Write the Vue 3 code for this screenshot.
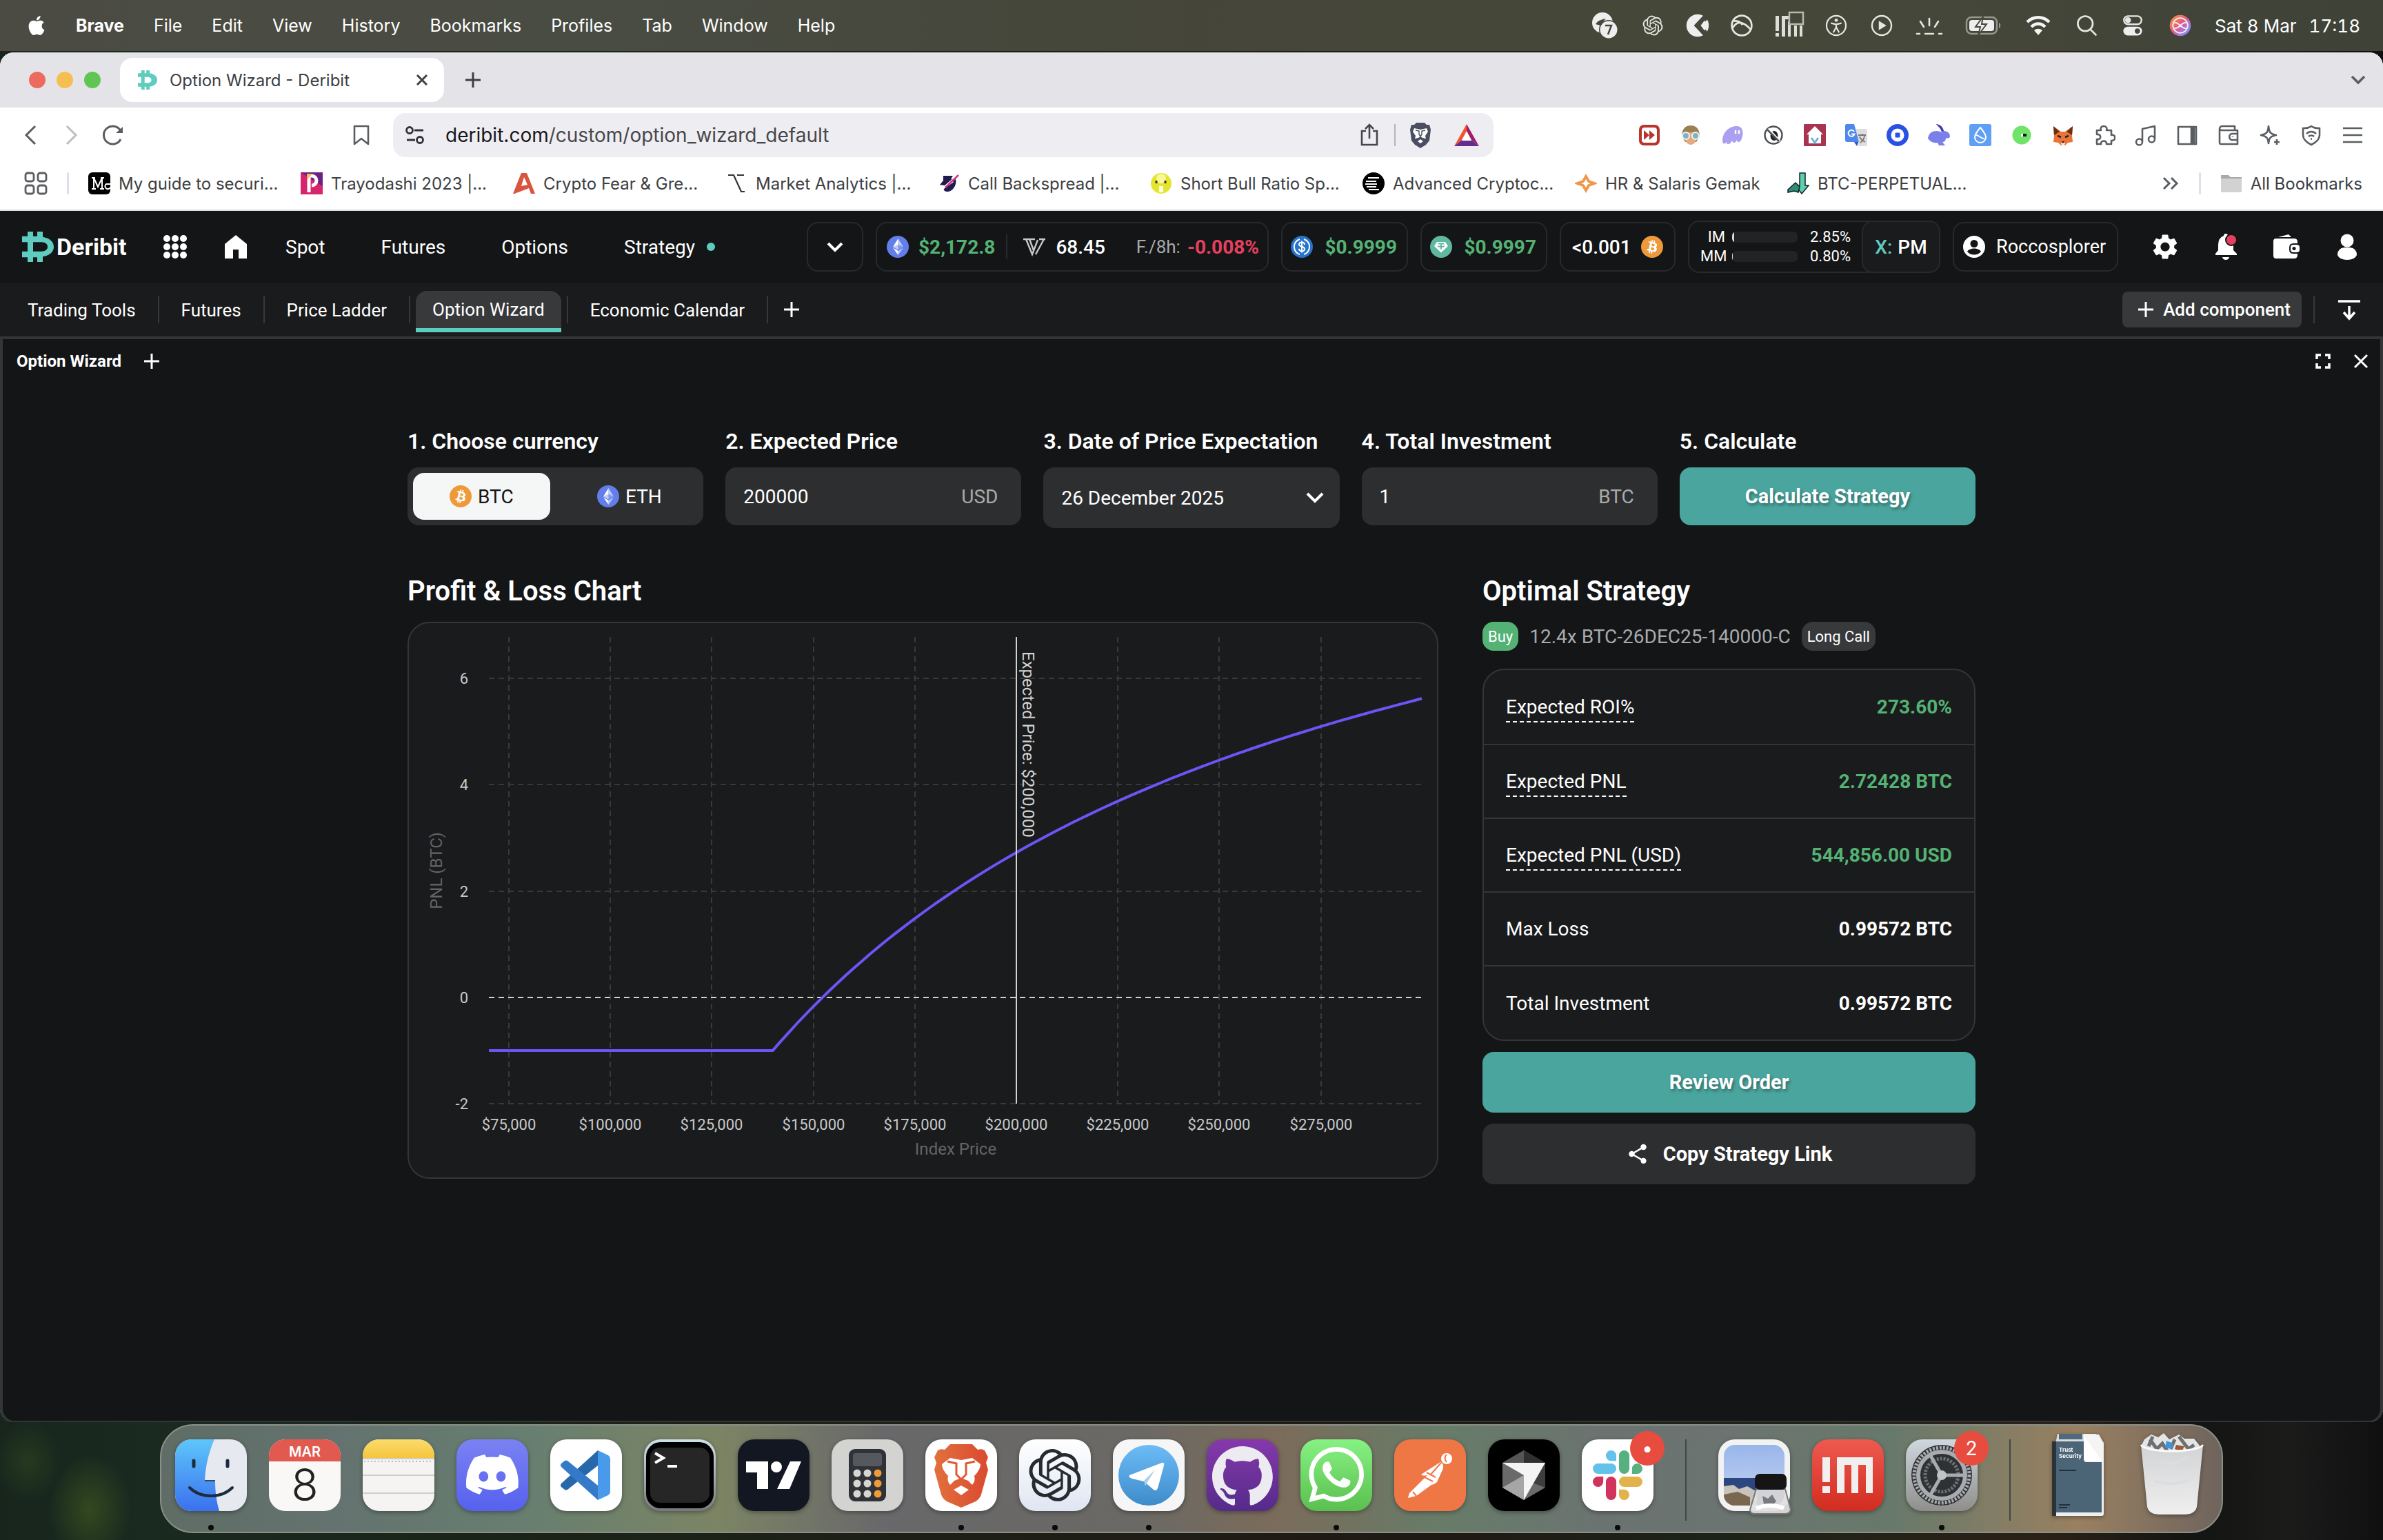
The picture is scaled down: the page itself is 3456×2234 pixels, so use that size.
<script setup>
import { ref, computed } from 'vue'

const menus = ['File', 'Edit', 'View', 'History', 'Bookmarks', 'Profiles', 'Tab', 'Window', 'Help']

const openai = 'M22.28 9.82a5.98 5.98 0 0 0-.52-4.91 6.05 6.05 0 0 0-6.51-2.9A6.07 6.07 0 0 0 4.98 4.18a5.98 5.98 0 0 0-4 2.9 6.05 6.05 0 0 0 .74 7.1 5.98 5.98 0 0 0 .51 4.91 6.05 6.05 0 0 0 6.52 2.9A5.98 5.98 0 0 0 13.26 24a6.06 6.06 0 0 0 5.77-4.21 5.99 5.99 0 0 0 4-2.9 6.06 6.06 0 0 0-.75-7.07zm-9.02 12.61a4.48 4.48 0 0 1-2.88-1.04l.14-.08 4.78-2.76a.8.8 0 0 0 .39-.68v-6.74l2.02 1.17a.07.07 0 0 1 .04.05v5.58a4.5 4.5 0 0 1-4.49 4.5zM3.6 18.3a4.47 4.47 0 0 1-.54-3.01l.14.09 4.79 2.75a.77.77 0 0 0 .78 0l5.84-3.36v2.33a.08.08 0 0 1-.03.06L9.74 19.95a4.5 4.5 0 0 1-6.14-1.65zM2.34 7.9a4.49 4.49 0 0 1 2.37-1.98V11.6a.77.77 0 0 0 .38.68l5.82 3.35-2.02 1.17a.08.08 0 0 1-.07 0l-4.83-2.79A4.5 4.5 0 0 1 2.34 7.87zm16.6 3.85L13.1 8.36 15.12 7.2a.08.08 0 0 1 .07 0l4.83 2.79a4.49 4.49 0 0 1-.68 8.1v-5.67a.79.79 0 0 0-.4-.67zm2.01-3.02l-.14-.09-4.78-2.78a.78.78 0 0 0-.78 0L9.41 9.23V6.9a.07.07 0 0 1 .03-.06l4.83-2.79a4.5 4.5 0 0 1 6.68 4.66zM8.3 12.86L6.29 11.7a.08.08 0 0 1-.04-.06V6.07a4.5 4.5 0 0 1 7.37-3.45l-.14.08L8.7 5.46a.8.8 0 0 0-.39.68zm1.1-2.36l2.6-1.5 2.61 1.5v3l-2.6 1.5-2.61-1.5Z'
const btcMark = 'M23.189 14.02c.314-2.096-1.283-3.223-3.465-3.975l.708-2.84-1.728-.43-.69 2.765c-.454-.114-.92-.22-1.385-.326l.695-2.783L15.596 6l-.708 2.839c-.376-.086-.746-.17-1.104-.26l.002-.009-2.384-.595-.46 1.846s1.283.294 1.256.312c.7.175.826.638.805 1.006l-.806 3.235c.048.012.11.03.18.057l-.183-.045-1.13 4.532c-.086.212-.303.531-.793.41.018.025-1.256-.313-1.256-.313l-.858 1.978 2.25.561c.418.105.828.215 1.231.318l-.715 2.872 1.727.43.708-2.84c.472.127.93.245 1.378.357l-.706 2.828 1.728.43.715-2.866c2.948.558 5.164.333 6.097-2.333.752-2.146-.037-3.385-1.588-4.192 1.13-.26 1.98-1.003 2.207-2.538zm-3.95 5.538c-.533 2.147-4.148.986-5.32.695l.95-3.805c1.172.293 4.929.872 4.37 3.11zm.535-5.569c-.487 1.953-3.495.96-4.47.717l.86-3.45c.975.243 4.118.696 3.61 2.733z'
const btcIcon = `<circle cx="16" cy="16" r="16" fill="#ee9a3a"/><path d="${btcMark}" fill="#fff"/>`
const ethIcon = '<circle cx="16" cy="16" r="16" fill="#627eea"/><g fill="#fff"><path fill-opacity=".6" d="M16.5 4v8.87l7.5 3.35z"/><path d="M16.5 4L9 16.22l7.5-3.35z"/><path fill-opacity=".6" d="M16.5 21.97v6.03L24 17.62z"/><path d="M16.5 28v-6.03L9 17.62z"/><path fill-opacity=".2" d="M16.5 20.57l7.5-4.35-7.5-3.35z"/><path fill-opacity=".6" d="M9 16.22l7.5 4.35v-7.7z"/></g>'
const usdcIcon = '<circle cx="16" cy="16" r="16" fill="#2775ca"/><path d="M13 5a11.5 11.5 0 0 0 0 22M19 5a11.5 11.5 0 0 1 0 22" fill="none" stroke="#fff" stroke-width="2"/><path d="M20 13c0-2-1.5-3.5-4-3.5s-4 1.2-4 3c0 4.500 8 2 8 6.500 0 2-1.600 3.200-4 3.200s-4-1.400-4-3.400M16 7.500v17" fill="none" stroke="#fff" stroke-width="2"/>'
const usdtIcon = '<circle cx="16" cy="16" r="16" fill="#5fb8a0"/><path d="M10 9h12l4 6-10 9.500L6 15z" fill="#fff"/><path d="M11.500 11.500h9M16 11.500v8M11 15c2 1.300 8 1.300 10 0" fill="none" stroke="#5fb8a0" stroke-width="2"/>'

const trayIcons = [
  { gap: 0, w: 40, art: '<circle cx="18" cy="16" r="15" fill="#eee"/><path d="M8 18c4-6 10-7 15-8-4 4-6 8-8 10z" fill="#45473b"/><circle cx="27" cy="26" r="14" fill="#45473b"/><circle cx="27" cy="26" r="12.500" fill="#eee"/><path d="M22 20h9l-5 13" fill="none" stroke="#45473b" stroke-width="2.500"/>' },
  { gap: 34, w: 34, art: `<path transform="translate(3 3) scale(1.420)" d="${openai}" fill="#e4e4e0"/>` },
  { gap: 30, w: 36, art: '<circle cx="20" cy="20" r="18" fill="#eee"/><path d="M14 20L31 2l6 6-9 12 9 12-6 6z" fill="#45473b"/><path d="M25 20l6-8a11 11 0 0 1 0 16z" fill="#eee"/>' },
  { gap: 28, w: 36, art: '<g fill="none" stroke="#e6e6e2" stroke-width="3"><circle cx="20" cy="20" r="16"/><path d="M5 25c7-14 17-12 30 2M7 13c6-1 11 1 14 6"/></g>' },
  { gap: 28, w: 44, art: '<g fill="#deded8"><path d="M1 6h5v22H1zM1 31h5v5H1zM10 6h5v30h-5zM15 6h6v5h-6zM19 14h4v22h-4zM28 20h4v16h-4zM36 20h4v16h-4z"/></g><rect x="21" y="1" width="20" height="17" fill="#45473b" stroke="#b8b9b0" stroke-width="2.500"/>' },
  { gap: 30, w: 34, art: '<g fill="none" stroke="#e6e6e2" stroke-width="2.600"><circle cx="20" cy="20" r="16.500"/><path d="M11 16l9 2 9-2M20 18v5l-5 9M20 23l5 9"/></g><circle cx="20" cy="11" r="2.800" fill="#e6e6e2"/>' },
  { gap: 32, w: 34, art: '<circle cx="20" cy="20" r="16.500" fill="none" stroke="#e6e6e2" stroke-width="2.800"/><path d="M15 12l13 8-13 8z" fill="#e6e6e2"/>' },
  { gap: 32, w: 40, art: '<g stroke="#e6e6e2" stroke-width="2.600" stroke-linecap="round"><path d="M20 10v10M7 14l5 8M33 14l-5 8M2 32h4M14 32h12M34 32h4"/></g>' },
  { gap: 32, w: 52, art: '<rect x="-4" y="8" width="44" height="24" rx="7" fill="none" stroke="#96978d" stroke-width="2.500"/><rect x="0" y="12" width="36" height="16" rx="4" fill="#eee"/><path d="M43 16c3 1 3 7 0 8z" fill="#96978d"/><path d="M20 7L9 22h7l-3 12 12-16h-7z" fill="#eee" stroke="#45473b" stroke-width="2"/>' },
  { gap: 34, w: 40, art: '<g fill="none" stroke="#f4f4f2" stroke-width="4.500"><path d="M4 15c9-9 23-9 32 0M10 22c6-6 14-6 20 0"/></g><path d="M20 34l-6-7c4-3 8-3 12 0z" fill="#f4f4f2"/>' },
  { gap: 32, w: 36, art: '<g fill="none" stroke="#e6e6e2" stroke-width="3"><circle cx="18" cy="17" r="12"/><path d="M26 26l9 9" stroke-linecap="round"/></g>' },
  { gap: 32, w: 34, art: '<rect x="5" y="4" width="30" height="14" rx="7" fill="none" stroke="#e6e6e2" stroke-width="2.800"/><circle cx="12" cy="11" r="5" fill="#e6e6e2"/><rect x="4" y="22" width="32" height="15" rx="7.500" fill="#eee"/><circle cx="28" cy="29.500" r="4.500" fill="#45473b"/>' },
  { gap: 34, w: 36, art: '<defs><linearGradient id="siri" x1="0" y1="0" x2="1" y2="1"><stop offset="0" stop-color="#f6a23a"/><stop offset=".45" stop-color="#e85a7e"/><stop offset=".75" stop-color="#9d7bea"/><stop offset="1" stop-color="#41b2f2"/></linearGradient></defs><circle cx="20" cy="20" r="17" fill="url(#siri)"/><g fill="none" stroke="#f2f2f2" stroke-width="2"><circle cx="20" cy="20" r="12"/><path d="M10 16c6-4 14 12 20 8M10 24c6 4 14-12 20-8"/></g>' },
]

const extensions = [
  '<rect x="1" y="1" width="30" height="30" rx="7" fill="#b8342c"/><rect x="5" y="5" width="22" height="22" rx="4" fill="#fff"/><path d="M8 9l8 7-8 7zM16 9l8 7-8 7z" fill="#b8342c"/>',
  '<path d="M3 18C3 6 9 2 16 2s13 4 13 16l-5 8H8z" fill="#9c8052"/><path d="M8 12h16v10c0 4-4 8-8 8s-8-4-8-8z" fill="#e4aa80"/><circle cx="9" cy="17" r="5" fill="#7eb4c2" stroke="#eef4f4" stroke-width="2"/><circle cx="23" cy="17" r="5" fill="#7eb4c2" stroke="#eef4f4" stroke-width="2"/>',
  '<path d="M2 24C2 12 12 2 24 3c8 1 9 10 6 18-2 6-6 7-7 2-2 5-6 5-7 1-3 6-8 7-8 2-3 4-6 3-6-2z" fill="#ab9ff2"/><path d="M21 9v5M26 9v5" stroke="#fff" stroke-width="2.500"/>',
  '<circle cx="16" cy="16" r="12.500" fill="none" stroke="#4d5156" stroke-width="2.500"/><ellipse cx="17" cy="17" rx="5.500" ry="7" fill="#222"/><path d="M8 7l17 18" stroke="#fff" stroke-width="4"/><path d="M7 8l17 17" stroke="#4d5156" stroke-width="2.500"/>',
  '<rect width="32" height="32" rx="1" fill="#a73450"/><path d="M4 15L16 3l12 12h-3v13H7V15z" fill="#fff"/><path d="M11 20l5 7 5-7" fill="none" stroke="#69b4d8" stroke-width="3"/>',
  '<path d="M13 7h17a2 2 0 0 1 2 2v21a2 2 0 0 1-2 2H19z" fill="#dedede"/><path d="M1 0h12l7 26H3c-2 0-3-1-3-3V2z" fill="#4f87ed"/><path d="M13 26h6l-2 6z" fill="#2558bd"/><path d="M13 11a4.500 4.500 0 1 0 .5 3.500H9" fill="none" stroke="#fff" stroke-width="2"/><path d="M19 16h11M25 14v2M22 27c4-3 6-6 6-11M21 18c1 4 4 6 8 8" fill="none" stroke="#777" stroke-width="1.800"/>',
  '<circle cx="16" cy="16" r="16" fill="#2952e3"/><circle cx="16" cy="16" r="9.500" fill="#fff"/><rect x="12.500" y="12.500" width="7" height="7" rx="1" fill="#2952e3"/>',
  '<path d="M12 0c7 1 10 5 11 10 6 0 9 4 9 8-1 3-4 3-6 2 0 4-2 6-5 6l4 5h-9l-2-4c-6 1-10-1-14-6 1-8 6-11 13-11 3 0 5 1 7 2-1-5-5-8-8-12z" fill="#7a7fea"/><path d="M12 0c7 1 10 5 11 10l-3 1c-1-5-5-8-8-11z" fill="#4a3cab"/>',
  '<rect width="32" height="32" rx="3" fill="#5fa0f4"/><path d="M16 5c5 6 8 10 8 14a8 8 0 0 1-16 0c0-4 3-8 8-14z" fill="none" stroke="#fff" stroke-width="2"/><path d="M9 16c5-1 8 6 13 5" fill="none" stroke="#fff" stroke-width="2"/>',
  '<circle cx="16" cy="16" r="13.500" fill="#6fe36a"/><rect x="15" y="14" width="8" height="4" fill="#111"/><rect x="15" y="14" width="3" height="4" fill="#fff"/>',
  '<path d="M2 3l11 8h6l11-8-1 14 1 9-7 1-4 4h-6l-4-4-7-1 1-9z" fill="#e87437"/><path d="M2 3l9 8-8 5zM30 3l-9 8 8 5z" fill="#6b2f12"/><path d="M13 27h6l-1 4h-4z" fill="#f4e8de"/><path d="M8 17l5 2M24 17l-5 2" stroke="#222" stroke-width="2.500"/><path d="M14 25h4l-2 3z" fill="#222"/>',
]

const toolIcons = [
  'M5 9h6c-3-8 11-8 8 0h7v7c7-2 7 9 0 8v5h-7c1-6-9-6-8 0H5v-7c7 1 7-8 0-7z',
  'M11 26V7l18-4v19M11 26a4.500 4.500 0 1 1-9 0 4.500 4.500 0 0 1 9 0zM29 22a4.500 4.500 0 1 1-9 0 4.500 4.500 0 0 1 9 0z',
  'M3 4h26v25H3zM22 4h7v25h-7zM24 5v23M26 5v23',
  'M3 7c0-3 2-4 4-4h18v6M3 7c0 2 2 2 4 2h22v20H5c-2 0-2-1-2-3zM29 14h-8c-5 0-5 9 0 9h8M22 18v1',
  'M14 3c1 9 2 11 11 13-9 2-10 4-11 12-1-8-2-10-11-12 9-2 10-4 11-13zM26 22v8M22 26h8',
  'M16 3c4 3 7 3 12 3v10c0 7-6 11-12 14C10 27 4 23 4 16V6c5 0 8 0 12-3zM9 14c4-4 10-4 14 0M12 18c2-2 6-2 8 0M15 21.500h2',
  'M2 6h28M2 16h28M2 26h28',
]

const bookmarks = [
  { t: 'My guide to securi...', art: '<rect width="32" height="32" rx="6" fill="#000"/><path d="M8 24V8l6 13 6-13v16M5 8h5M18 8h5M5 24h6M17 24h6M32 17h-6a4 4 0 1 0 6 5" fill="none" stroke="#fff" stroke-width="2"/>' },
  { t: 'Trayodashi 2023 |...', art: '<rect width="32" height="32" fill="#d6246d"/><path d="M0 0h32v20z" fill="#6d2282"/><path d="M12 29V5h4a6 6 0 0 1 0 14" fill="none" stroke="#fff" stroke-width="5"/><path d="M9 2h8l-7 8z" fill="#f3c14b"/>' },
  { t: 'Crypto Fear & Gre...', art: '<path d="M0 31L12 1h8l12 30h-6l-3-8-21 8zM12 20l9-2-5-11z" fill="#d95540"/>' },
  { t: 'Market Analytics |...', art: '<path d="M4 4h8l11 24h5M17 4h10" fill="none" stroke="#333" stroke-width="2.200"/>' },
  { t: 'Call Backspread |...', art: '<path d="M8 5h14l-3 5h7c2 8-4 18-12 18-6 0-7-5-4-9l-7-1 5-6z" fill="#211a4f"/><path d="M9 22l13-9M2 28L30 4" stroke="#fff" stroke-width="3"/><path d="M11 22L30 4" stroke="#d1317c" stroke-width="2.500"/>' },
  { t: 'Short Bull Ratio Sp...', art: '<circle cx="16" cy="16" r="15" fill="#e6e52e"/><circle cx="16" cy="9" r="7" fill="#f8f79a"/><path d="M9 12v4M22 12v4" stroke="#333" stroke-width="3"/><path d="M13 20h6v9h-6z" fill="#fffde2"/>' },
  { t: 'Advanced Cryptoc...', art: '<circle cx="16" cy="16" r="16" fill="#000"/><path d="M8 8h16M5 13h15M4 17h17M6 21h14M9 25h15" stroke="#fff" stroke-width="2"/>' },
  { t: 'HR & Salaris Gemak', art: '<path d="M16 6l4 7 8 3-8 3-4 7-4-7-8-3 8-3z" fill="none" stroke="#f0984a" stroke-width="4"/>' },
  { t: 'BTC-PERPETUAL...', art: '<path d="M18 1h8v18h5L21 31 12 19h6z" fill="#5fd0a8" stroke="#123" stroke-width="1.500"/><path d="M1 25l11-10 6 6-2 8-6-2-9 2z" fill="#2f8d70" stroke="#123" stroke-width="1.500"/>' },
]

const siteLinks = ['Spot', 'Futures', 'Options', 'Strategy']
const workspaces = ['Trading Tools', 'Futures', 'Price Ladder', 'Option Wizard', 'Economic Calendar']
const activeWorkspace = 'Option Wizard'

const currency = ref('BTC')
const expectedPrice = ref('200000')
const investment = ref('1')
const expiry = ref('26 December 2025')

const results = [
  { label: 'Expected ROI%', value: '273.60%', hint: true },
  { label: 'Expected PNL', value: '2.72428 BTC', hint: true },
  { label: 'Expected PNL (USD)', value: '544,856.00 USD', hint: true },
  { label: 'Max Loss', value: '0.99572 BTC' },
  { label: 'Total Investment', value: '0.99572 BTC' },
]

// Chart geometry, in the units of the SVG view box
const plot = { left: 116, right: 1469, top: 20, bottom: 697 }
const strike = 140000
const size = 12.4
const premium = 0.99572
const px = (price) => 145 + ((price - 75000) / 25000) * 147.2
const py = (pnl) => 543 - pnl * 77.2
const xTicks = [75, 100, 125, 150, 175, 200, 225, 250, 275].map((k) => ({ x: Math.round(px(k * 1000)), t: `$${k},000` }))
const yTicks = [6, 4, 2, 0, -2].map((v) => ({ y: Math.round(py(v)), t: v }))
const curve = computed(() => {
  const pts = [[plot.left, py(-premium)], [px(strike), py(-premium)]]
  for (let s = strike + 2000; s <= 300000; s += 2000) {
    pts.push([Math.min(px(s), plot.right), py(size * (1 - strike / s) - premium)])
  }
  return pts.map(([x, y]) => `${x.toFixed(1)},${y.toFixed(1)}`).join(' ')
})

const tile = (fill) => `<rect width="104" height="104" rx="24" fill="${fill}"/>`
const grad = (id, a, b) => `<defs><linearGradient id="${id}" x1="0" y1="0" x2="0" y2="1"><stop offset="0" stop-color="${a}"/><stop offset="1" stop-color="${b}"/></linearGradient></defs>`
const dots = (xs, ys) => ys.map((y) => xs.map((x, i) => `<circle cx="${x}" cy="${y}" r="5.500" fill="${i === 2 ? '#f09a38' : '#d6d6d2'}"/>`).join('')).join('')

const dock = [
  { name: 'Finder', open: true, art: grad('fa', '#5ec6fa', '#3a70ee') + '<clipPath id="fc"><rect width="104" height="104" rx="24"/></clipPath><g clip-path="url(#fc)"><rect width="104" height="104" fill="#e6e9f0"/><path d="M0 0h57c-8 18-13 38-14 60h15c0 16 2 30 6 44H0z" fill="url(#fa)"/></g><path d="M27 31v8M76 31v8" stroke="#1d2b3c" stroke-width="5" stroke-linecap="round"/><path d="M21 70c16 16 46 16 62 0" fill="none" stroke="#1d2b3c" stroke-width="4" stroke-linecap="round"/><path d="M43 60h15" stroke="#33475e" stroke-width="2"/>' },
  { name: 'Calendar', cal: true },
  { name: 'Notes', art: tile('#f5f4f2') + grad('nt', '#fbdc6e', '#f5c53c') + '<path d="M0 27V24A24 24 0 0 1 24 0h56a24 24 0 0 1 24 24v3z" fill="url(#nt)"/><path d="M0 28h104M0 52h104M0 78h104" stroke="#cfcecb" stroke-width="2"/><path d="M2 32h100" stroke="#bbb" stroke-width="2" stroke-dasharray="2 3"/>' },
  { name: 'Discord', art: grad('ds', '#7a82f2', '#5661ee') + tile('url(#ds)') + '<path transform="translate(14 13) scale(3.160)" fill="#fff" d="M20.317 4.37a19.79 19.79 0 00-4.885-1.515.074.074 0 00-.079.037c-.21.375-.444.865-.608 1.25a18.27 18.27 0 00-5.487 0 12.640 12.640 0 00-.618-1.250.077.077 0 00-.078-.037A19.736 19.736 0 003.677 4.370a.07.07 0 00-.032.028C.533 9.046-.32 13.580.1 18.058a.082.082 0 00.031.056 19.900 19.900 0 005.993 3.030.078.078 0 00.084-.028c.462-.63.873-1.295 1.226-1.994a.076.076 0 00-.041-.106 13.100 13.100 0 01-1.872-.892.077.077 0 01-.008-.128c.126-.094.252-.192.372-.291a.074.074 0 01.078-.01c3.927 1.793 8.180 1.793 12.061 0a.074.074 0 01.079.009c.12.099.246.198.373.292a.077.077 0 01-.007.128 12.300 12.300 0 01-1.873.891.077.077 0 00-.041.107c.36.698.772 1.363 1.225 1.993a.076.076 0 00.084.029 19.840 19.840 0 006.003-3.030.077.077 0 00.031-.055c.5-5.177-.838-9.674-3.549-13.660a.061.061 0 00-.031-.029zM8.020 15.330c-1.182 0-2.157-1.085-2.157-2.418s.956-2.420 2.157-2.420c1.210 0 2.176 1.096 2.157 2.420 0 1.333-.956 2.418-2.157 2.418zm7.975 0c-1.183 0-2.157-1.085-2.157-2.418s.955-2.420 2.157-2.420c1.210 0 2.176 1.096 2.157 2.420 0 1.333-.946 2.418-2.157 2.418Z"/>' },
  { name: 'Code', art: tile('#fff') + '<path d="M69 16L16 64q-2 3 0 5l5 4q2 1 4 0l44-35z" fill="#2768ad"/><path d="M69 88L16 40q-2-3 0-5l5-4q2-1 4 0l44 36z" fill="#3579c9"/><path d="M69 16l15 7q3 2 3 5v48q0 3-3 5l-15 7z" fill="#4a9aeb"/>' },
  { name: 'Terminal', art: grad('tm', '#cfe0ea', '#77787c') + tile('url(#tm)') + '<rect x="3" y="4" width="98" height="96" rx="21" fill="#000"/><rect x="9" y="12" width="86" height="80" rx="14" fill="#262626"/><path d="M16 20l12 7-12 7M34 39h14" fill="none" stroke="#fff" stroke-width="4"/>' },
  { name: 'TradingView', art: tile('#131722') + '<path d="M12 32h32v40H28V48H12zM76 32h16L75 72H57z" fill="#fff"/><circle cx="56" cy="40" r="8" fill="#fff"/>' },
  { name: 'Calculator', art: tile('#d3d3d1') + '<rect x="25" y="14" width="54" height="76" rx="9" fill="#2f3236"/><rect x="31" y="20" width="42" height="19" rx="4" fill="#55595e"/>' + dots([37, 52, 67], [49, 64, 79]) },
  { name: 'Brave', open: true, art: '<defs><linearGradient id="br"><stop offset="0" stop-color="#e2703d"/><stop offset="1" stop-color="#da4a30"/></linearGradient></defs>' + tile('#fff') + '<path d="M36 7h32l8 8q6-2 10 1l5 10-3 8 3 10-10 36q-2 6-8 10L52 99 31 90q-6-4-8-10L13 44l3-10-3-8 5-10q4-3 10-1z" fill="url(#br)"/><path d="M52 30l16-3 12 9q0 8-9 17 2 8-3 13l-6-6-10-4-10 4-6 6q-5-5-3-13-9-9-9-17l12-9zM52 67l11 6-11 8-11-8z" fill="#fff"/><path d="M32 32l13 3v16l7 7 7-7V35l13-3" fill="none" stroke="#de5a35" stroke-width="3"/>' },
  { name: 'ChatGPT', open: true, art: grad('cg', '#fff', '#dfe6f2') + tile('url(#cg)') + `<path transform="translate(14 14) scale(3.160)" d="${openai}" fill="#262b30"/>` },
  { name: 'Telegram', open: true, art: grad('tg', '#6cbcf6', '#3e8bca') + tile('#f6f6f6') + '<circle cx="52" cy="52" r="44" fill="url(#tg)"/><path d="M24 52l47-18q4-1 3 4l-9 33q-2 5-6 2L45 61l-17-4q-6-2-4-5z" fill="#fff"/><path d="M45 60l16-16-11 18-3 6z" fill="#a9cfe9"/>' },
  { name: 'GitHub', art: grad('gh', '#8639ab', '#542b8a') + tile('url(#gh)') + '<path transform="translate(8 9) scale(3.660)" fill="#ecebf2" d="M12 .297c-6.630 0-12 5.373-12 12 0 5.303 3.438 9.800 8.205 11.385.6.113.82-.258.82-.577 0-.285-.01-1.040-.015-2.040-3.338.724-4.042-1.610-4.042-1.610C4.422 18.070 3.633 17.700 3.633 17.700c-1.087-.744.084-.729.084-.729 1.205.084 1.838 1.236 1.838 1.236 1.070 1.835 2.809 1.305 3.495.998.108-.776.417-1.305.76-1.605-2.665-.3-5.466-1.332-5.466-5.930 0-1.310.465-2.380 1.235-3.220-.135-.303-.54-1.523.105-3.176 0 0 1.005-.322 3.300 1.230.96-.267 1.980-.399 3-.405 1.020.006 2.040.138 3 .405 2.280-1.552 3.285-1.230 3.285-1.230.645 1.653.24 2.873.12 3.176.765.84 1.230 1.910 1.230 3.220 0 4.610-2.805 5.625-5.475 5.920.42.36.81 1.096.81 2.220 0 1.606-.015 2.896-.015 3.286 0 .315.21.69.825.57C20.565 22.092 24 17.592 24 12.297c0-6.627-5.373-12-12-12"/>' },
  { name: 'WhatsApp', open: true, art: grad('wa', '#86f283', '#5abf4e') + tile('url(#wa)') + '<path transform="translate(12 11) scale(3.340)" fill="#fff" d="M17.472 14.382c-.297-.149-1.758-.867-2.030-.967-.273-.099-.471-.148-.67.15-.197.297-.767.966-.94 1.164-.173.199-.347.223-.644.075-.297-.15-1.255-.463-2.390-1.475-.883-.788-1.480-1.761-1.653-2.059-.173-.297-.018-.458.13-.606.134-.133.298-.347.446-.52.149-.174.198-.298.298-.497.099-.198.05-.371-.025-.52-.075-.149-.669-1.612-.916-2.207-.242-.579-.487-.5-.669-.51-.173-.008-.371-.01-.57-.01-.198 0-.52.074-.792.372-.272.297-1.040 1.016-1.040 2.479 0 1.462 1.065 2.875 1.213 3.074.149.198 2.096 3.200 5.077 4.487.709.306 1.262.489 1.694.625.712.227 1.360.195 1.871.118.571-.085 1.758-.719 2.006-1.413.248-.694.248-1.289.173-1.413-.074-.124-.272-.198-.57-.347m-5.421 7.403h-.004a9.870 9.870 0 01-5.031-1.378l-.361-.214-3.741.982.998-3.648-.235-.374a9.860 9.860 0 01-1.510-5.260c.001-5.450 4.436-9.884 9.888-9.884 2.640 0 5.122 1.030 6.988 2.898a9.825 9.825 0 012.893 6.994c-.003 5.450-4.437 9.884-9.885 9.884m8.413-18.297A11.815 11.815 0 0012.050 0C5.495 0 .16 5.335.157 11.892c0 2.096.547 4.142 1.588 5.945L.057 24l6.305-1.654a11.882 11.882 0 005.683 1.448h.005c6.554 0 11.890-5.335 11.893-11.893a11.821 11.821 0 00-3.480-8.413Z"/>' },
  { name: 'Postman', art: tile('#ef7746') + '<circle cx="76" cy="28" r="8" fill="#fff"/><path d="M67 33q5 3 4 9L62 62q-3 3-8 4L32 82l-12 3 2-7 26-26q-8 2-9-1z" fill="#fff"/><path d="M40 53l16 8M47 48l13 7M52 52l16-18M27 76l5 6M76 22q-5 5 0 11" fill="none" stroke="#ef7746" stroke-width="2"/>' },
  { name: 'Cursor', art: tile('#000') + '<path d="M52 16l31 18v36L52 88 21 70V34z" fill="#6a6a6a"/><path d="M52 16L21 34h31z" fill="#555"/><path d="M52 16l31 18H52z" fill="#2f2f2f"/><path d="M83 34v36L62 62z" fill="#3d3d3d"/><path d="M21 70l31-18v36z" fill="#a6a6a6"/><path d="M21 34h62L52 88V52z" fill="#f4f4f4"/>' },
  { name: 'Slack', open: true, badge: '•', art: tile('#fff') + '<g transform="translate(16 16) scale(3)"><path fill="#d0335c" d="M5.042 15.165a2.520 2.520 0 1 1-2.520-2.520h2.520zM6.313 15.165a2.520 2.520 0 0 1 5.042 0v6.313a2.520 2.520 0 0 1-5.042 0z"/><path fill="#63c2ea" d="M8.834 5.042a2.520 2.520 0 1 1 2.521-2.520v2.520zM8.834 6.313a2.520 2.520 0 0 1 0 5.042H2.522a2.520 2.520 0 0 1 0-5.042z"/><path fill="#56b07f" d="M18.956 8.834a2.520 2.520 0 1 1 2.522 2.521h-2.522zM17.688 8.834a2.520 2.520 0 0 1-5.043 0V2.522a2.520 2.520 0 0 1 5.043 0z"/><path fill="#e2b34c" d="M15.165 18.956a2.520 2.520 0 1 1-2.520 2.522v-2.522zM15.165 17.688a2.520 2.520 0 0 1 0-5.043h6.313a2.520 2.520 0 0 1 0 5.043z"/></g>' },
  { divider: true },
  { name: 'Preview', art: tile('#f2f2f2') + grad('pv', '#98b6ea', '#c6d4f2') + '<clipPath id="pc"><rect x="8" y="8" width="88" height="88" rx="16"/></clipPath><g clip-path="url(#pc)"><rect x="8" y="8" width="88" height="88" fill="url(#pv)"/><path d="M8 56h88v40H8z" fill="#2c4680"/><path d="M8 68l14-2 8 6 12-4 14 8v20H8z" fill="#c8c4bc"/><path d="M8 80l20-4 18 8v12H8z" fill="#7b674f"/></g><path d="M55 72h42l8 30q-1 6-8 6H53q-7 0-7-6z" fill="#dfe0e1" fill-opacity=".92" stroke="#77787a" stroke-width="2"/><path d="M64 82l8 4 6-6 6 10-6 6-12-2z" fill="#77797c"/><path d="M55 100q20-8 40 0" fill="none" stroke="#fff" stroke-width="6"/><rect x="53" y="50" width="46" height="23" rx="7" fill="#151515"/>' },
  { name: 'Monitor', art: grad('mm', '#ee5a50', '#d22c20') + tile('url(#mm)') + '<path d="M15 26h11v36H15zM15 68h11v10H15zM36 26h52v11H36zM36 26h11v52H36zM57 37h10v41H57zM78 37h10v41H78z" fill="#f2f0ef"/>' },
  { name: 'Settings', open: true, badge: '2', art: grad('st', '#cfd8df', '#8f8e8c') + tile('url(#st)') + '<circle cx="52" cy="52" r="44" fill="#2f3133"/><g fill="none" stroke="#a8acb0"><circle cx="52" cy="52" r="40" stroke-width="5" stroke-dasharray="3 2"/><circle cx="52" cy="52" r="34" stroke-width="6"/><circle cx="52" cy="52" r="24" stroke="#6e7275" stroke-width="5" stroke-dasharray="3 2"/><path d="M52 52h32M52 52L36 24M52 52L36 80" stroke-width="5"/></g><circle cx="52" cy="52" r="7" fill="#c0c4c7"/>' },
  { divider: true },
  { name: 'Documents', doc: true, art: '<path d="M22-8h56v18H18z" fill="#d8dde0"/><path d="M24-8h34v8H24z" fill="#50697c"/><rect x="14" y="3" width="75" height="108" rx="3" fill="#eceeef"/><path d="M14 3h6v108h-6z" fill="#2b3338"/><path d="M20 3h42l24 29v74H20z" fill="#4b6476"/><path d="M60-8l22 1 6 11v29H64q-4 0-4-4z" fill="#f4f4f4"/><path d="M60-6l26 37H64q-4 0-4-4z" fill="#fff"/><path d="M24 45h25M24 95h16M24 99h12" stroke="#23313c" stroke-width="2"/><text x="24" y="18" font-size="8" font-weight="700" fill="#fff">Trust</text><text x="24" y="27" font-size="8" font-weight="700" fill="#fff">Security</text>' },
  { name: 'Trash', art: grad('tr', '#d2d3d4', '#efeff0') + '<path d="M12 0l10-7 10 4 8-6 8 9 14-7 8 6 14 0 8 10-4 14H14L8 8z" fill="#e4e4e4"/><path d="M20 0l10 14 8-8 8 12M62-4l14 18 8-6M24-4l-6 14M56 0l-6 14" stroke="#6d6f72" stroke-width="5" fill="none"/><path d="M44 2l10 4-2 8-10-2z" fill="#3f93d8"/><path d="M58 8l12 2-4 8-10-4z" fill="#9a5a34"/><path d="M7 8c8 12 82 12 90 0l-9 90q-3 11-18 11H34q-15 0-18-11z" fill="url(#tr)"/><path d="M7 8c8 12 82 12 90 0" fill="none" stroke="#fafafa" stroke-width="3"/><path d="M34 32q24 8 40-8M26 60q20 8 50 0" stroke="#dcdddf" stroke-width="4" fill="none"/>' },
]
</script>

<template>
  <div class="desktop">
    <header class="menubar">
      <nav class="menus">
        <svg class="apple" viewBox="0 0 24 24" fill="#fff"><path d="M12.152 6.896c-.948 0-2.415-1.078-3.960-1.040-2.040.027-3.910 1.183-4.961 3.014-2.117 3.675-.546 9.103 1.519 12.090 1.013 1.454 2.208 3.090 3.792 3.039 1.520-.065 2.090-.987 3.935-.987 1.831 0 2.350.987 3.960.948 1.637-.026 2.676-1.480 3.676-2.948 1.156-1.688 1.636-3.325 1.662-3.415-.039-.013-3.182-1.221-3.220-4.857-.026-3.040 2.480-4.494 2.597-4.559-1.429-2.090-3.623-2.324-4.390-2.376-2-.156-3.675 1.090-4.610 1.090zM15.530 3.830c.843-1.012 1.400-2.427 1.245-3.830-1.207.052-2.662.805-3.532 1.818-.78.896-1.454 2.338-1.273 3.714 1.338.104 2.715-.688 3.559-1.701" /></svg>
        <button class="menu app">Brave</button>
        <button v-for="m in menus" :key="m" class="menu">{{ m }}</button>
      </nav>
      <div class="tray">
        <svg v-for="(t, i) in trayIcons" :key="i" class="tray-icon" viewBox="0 0 40 40" :style="{ width: t.w + 'px', marginLeft: t.gap + 'px' }" v-html="t.art"></svg>
        <time class="clock"><span>Sat 8 Mar</span><span>17:18</span></time>
      </div>
    </header>

    <main class="window">
      <div class="tabstrip">
        <i class="light red"></i><i class="light amber"></i><i class="light green"></i>
        <div class="btab">
          <svg class="fav" viewBox="0 0 46 46" fill="#5ecdc0"><path d="M0 7h8V0h8v7h4V0h8v7c12 2 18 8 18 16s-6 14-18 16v7h-8v-7h-4v7H8v-7H0v-9h8V16H0zm16 9v14h6c6 0 10-2 10-7s-4-7-10-7z" /></svg>
          <span>Option Wizard - Deribit</span>
          <button class="icon-btn" aria-label="Close tab"><svg width="20" height="20" viewBox="0 0 20 20"><path d="M3 3l14 14M17 3L3 17" stroke="#3c4043" stroke-width="3" /></svg></button>
        </div>
        <button class="icon-btn newtab" aria-label="New tab"><svg width="24" height="24" viewBox="0 0 24 24"><path d="M12 1v22M1 12h22" stroke="#3c4043" stroke-width="3" /></svg></button>
        <button class="icon-btn push" aria-label="Search tabs"><svg width="24" height="24" viewBox="0 0 24 24"><path d="M3 7l9 9 9-9" fill="none" stroke="#5a5e62" stroke-width="3.500" /></svg></button>
      </div>

      <div class="toolbar">
        <div class="navset">
          <button class="icon-btn" aria-label="Back"><svg width="32" height="32" viewBox="0 0 32 32"><path d="M23 3L10 16l13 13" fill="none" stroke="#5a5e62" stroke-width="3" /></svg></button>
          <button class="icon-btn" aria-label="Forward"><svg width="32" height="32" viewBox="0 0 32 32"><path d="M9 3l13 13L9 29" fill="none" stroke="#bdbec2" stroke-width="3" /></svg></button>
          <button class="icon-btn" aria-label="Reload"><svg width="32" height="32" viewBox="0 0 32 32"><path d="M27 22A13 13 0 1 1 27 10" fill="none" stroke="#5a5e62" stroke-width="3" /><path d="M20 13h10V4z" fill="#5a5e62" /></svg></button>
        </div>
        <button class="icon-btn mark" aria-label="Bookmark"><svg width="32" height="32" viewBox="0 0 32 32"><path d="M6 3h20v26l-10-8-10 8z" fill="none" stroke="#5a5e62" stroke-width="2.600" stroke-linejoin="round" /></svg></button>
        <div class="urlbar">
          <svg width="32" height="32" viewBox="0 0 32 32" fill="none" stroke="#303338" stroke-width="2.800"><circle cx="8" cy="9" r="4.500" /><path d="M15 9h13M4 23h12" /><circle cx="23" cy="23" r="4.500" /></svg>
          <p class="url"><b>deribit.com</b>/custom/option_wizard_default</p>
          <svg width="32" height="36" viewBox="0 0 32 36" fill="none" stroke="#44474c" stroke-width="2.600"><path d="M11 12H5v20h22V12h-6M16 23V3M10 9l6-6 6 6" /></svg>
          <i class="vbar"></i>
          <svg width="32" height="38" viewBox="0 0 32 38"><path d="M10 1h12l3 3h4l2 7-2 16-5 6-8 5-8-5-5-6L1 11l2-7h4z" fill="#4a4e60" /><path d="M7 9l9 2 9-2 2 5-4 6 1 4-5-1-3-2-3 2-5 1 1-4-4-6zM16 25l4 3-4 3-4-3z" fill="#fff" /><path d="M9 12l5 1v5l2 3 2-3v-5l5-1" fill="none" stroke="#4a4e60" stroke-width="1.400" /></svg>
          <svg class="bat" width="38" height="34" viewBox="0 0 38 34"><path d="M19 1L1 33l11-9 7-13z" fill="#f2552c" /><path d="M19 1l18 32-11-9-7-13z" fill="#9e1f63" /><path d="M1 33h36l-11-9H12z" fill="#662d91" /><path d="M19 12l7 13H12z" fill="#fff" /></svg>
        </div>
        <div class="exts">
          <button v-for="(e, i) in extensions" :key="i" class="icon-btn" aria-label="Extension"><svg width="32" height="32" viewBox="0 0 32 32" v-html="e"></svg></button>
          <button v-for="d in toolIcons" :key="d" class="icon-btn" aria-label="Browser tool"><svg width="32" height="32" viewBox="0 0 32 32" fill="none" stroke="#5a5e62" stroke-width="2.600" stroke-linejoin="round"><path :d="d" /></svg></button>
        </div>
      </div>

      <nav class="bookmarks">
        <svg class="apps" width="34" height="34" viewBox="0 0 34 34" fill="none" stroke="#5a5e62" stroke-width="2.800"><rect x="2" y="2" width="12" height="12" rx="3" /><rect x="20" y="2" width="12" height="12" rx="3" /><rect x="2" y="20" width="12" height="12" rx="3" /><rect x="20" y="20" width="12" height="12" rx="3" /></svg>
        <i class="bdiv"></i>
        <a v-for="b in bookmarks" :key="b.t" href="#" class="bm"><svg width="32" height="32" viewBox="0 0 32 32" v-html="b.art"></svg><span>{{ b.t }}</span></a>
        <svg class="more" width="26" height="20" viewBox="0 0 26 20" fill="none" stroke="#5a5e62" stroke-width="3"><path d="M3 2l8 8-8 8M14 2l8 8-8 8" /></svg>
        <i class="bdiv"></i>
        <a href="#" class="bm all"><svg width="32" height="32" viewBox="0 0 32 32"><path d="M1 4h11l3 3h16v21H1z" fill="#a9a9a9" /><path d="M1 9h30v18a2 2 0 0 1-2 2H3a2 2 0 0 1-2-2z" fill="#d2d2d2" /></svg><span>All Bookmarks</span></a>
      </nav>

      <section class="page">
        <header class="site">
          <a href="#" class="logo"><svg width="46" height="44" viewBox="0 0 46 46" preserveAspectRatio="none" fill="#5ecdc0"><path d="M0 7h8V0h8v7h6V0h8v8c11 2 16 8 16 15s-5 13-16 15v8h-8v-7h-6v7H8v-7H0v-9h8V16H0zm16 9v14h12c6 0 9-3 9-7s-3-7-9-7z" /></svg><span>Deribit</span></a>
          <svg class="grid9" width="36" height="36" viewBox="0 0 36 36" fill="#fff"><template v-for="y in [6, 18, 30]" :key="y"><circle v-for="x in [6, 18, 30]" :key="x" :cx="x" :cy="y" r="5" /></template></svg>
          <svg class="home" width="36" height="36" viewBox="0 0 36 36" fill="#fff"><path d="M18 1l16 13v21H22V22h-8v13H2V14z" /></svg>
          <nav class="links"><a v-for="l in siteLinks" :key="l" href="#">{{ l }}</a><i class="dot"></i></nav>
          <button class="box chev" aria-label="More markets"><svg width="28" height="28" viewBox="0 0 28 28"><path d="M4 9l10 10L24 9" fill="none" stroke="#fff" stroke-width="4" /></svg></button>
          <div class="box quote">
            <svg class="coin" viewBox="0 0 32 32" v-html="ethIcon"></svg><b class="up">$2,172.8</b>
            <i class="qdiv"></i>
            <svg width="34" height="32" viewBox="0 0 34 32" fill="none" stroke="#c8c8c8" stroke-width="2.400"><path d="M1 5h17M5 5l9 22 8-21M10 5l6 16M24 5h9M19 27L31 5" /></svg>
            <b>68.45</b><span class="dim">F./8h:</span><b class="down">-0.008%</b>
          </div>
          <div class="box stable"><svg class="coin" viewBox="0 0 32 32" v-html="usdcIcon"></svg><b class="up">$0.9999</b></div>
          <div class="box stable"><svg class="coin" viewBox="0 0 32 32" v-html="usdtIcon"></svg><b class="up">$0.9997</b></div>
          <div class="box equity"><b>&lt;0.001</b><svg class="coin" viewBox="0 0 32 32" v-html="btcIcon"></svg></div>
          <div class="box margin">
            <div class="meters">
              <span>IM</span><i class="meter"><i class="fill im"></i></i><span>2.85%</span>
              <span>MM</span><i class="meter"><i class="fill"></i></i><span>0.80%</span>
            </div>
            <b class="pm"><em>X:</em> PM</b>
          </div>
          <button class="box account"><svg class="coin" viewBox="0 0 32 32"><circle cx="16" cy="16" r="16" fill="#fff" /><circle cx="16" cy="11.500" r="5.500" fill="#141517" /><path d="M6 23c3-6 17-6 20 0-5 6-15 6-20 0z" fill="#141517" /></svg>Roccosplorer</button>
          <div class="actions">
            <button class="icon-btn" aria-label="Settings"><svg width="44" height="44" viewBox="0 0 24 24" fill="#fff"><path d="M19.140 12.940c.04-.3.06-.61.06-.94 0-.32-.02-.64-.07-.94l2.030-1.580c.18-.14.23-.41.12-.61l-1.920-3.320c-.12-.22-.37-.29-.59-.22l-2.390.96c-.5-.38-1.030-.7-1.620-.94l-.36-2.540c-.04-.24-.24-.41-.48-.41h-3.840c-.24 0-.43.17-.47.41l-.36 2.540c-.59.24-1.130.57-1.620.94l-2.390-.96c-.22-.08-.47 0-.59.22L2.740 8.870c-.12.21-.08.47.12.61l2.030 1.580c-.05.3-.09.63-.09.94s.02.64.07.94l-2.030 1.580c-.18.14-.23.41-.12.61l1.920 3.320c.12.22.37.29.59.22l2.390-.96c.5.38 1.030.7 1.620.94l.36 2.540c.05.24.24.41.48.41h3.840c.24 0 .44-.17.47-.41l.36-2.540c.59-.24 1.130-.56 1.620-.94l2.390.96c.22.08.47 0 .59-.22l1.920-3.320c.12-.22.07-.47-.12-.61l-2.010-1.580zM12 15.600c-1.980 0-3.600-1.620-3.600-3.600s1.620-3.600 3.600-3.600 3.600 1.620 3.600 3.600-1.620 3.600-3.600 3.600z" /></svg></button>
            <button class="icon-btn" aria-label="Notifications"><svg width="44" height="44" viewBox="0 0 44 44" fill="#fff"><path d="M22 3q3 0 3 3 8 3 8 13v8l5 5v2H7v-2l4-5v-8q0-10 8-13 0-3 3-3zM17 37h10q-1 4-5 4t-5-4z" /><circle cx="30" cy="12" r="8" fill="#e5405e" stroke="#141517" stroke-width="2" /></svg></button>
            <button class="icon-btn" aria-label="Wallet"><svg width="44" height="44" viewBox="0 0 44 44" fill="#fff"><path d="M10 8l15-4 4 4zM7 10h26q5 0 5 5v2h-6q-6 0-6 6v3q0 6 6 6h6v2q0 5-5 5H7q-4 0-4-4V14q0-4 4-4z" /><rect x="28" y="19" width="13" height="11" rx="4" /><circle cx="33" cy="24.500" r="2.500" fill="#141517" /></svg></button>
            <button class="icon-btn" aria-label="Profile"><svg width="44" height="44" viewBox="0 0 44 44" fill="#fff"><circle cx="22" cy="13" r="9.500" /><path d="M8 34q0-10 10-11h8q10 1 10 11-3 7-14 7T8 34z" /></svg></button>
          </div>
        </header>

        <nav class="workspaces">
          <template v-for="w in workspaces" :key="w"><a href="#" class="ws" :class="{ on: w === activeWorkspace }">{{ w }}</a><i class="wdiv"></i></template>
          <button class="icon-btn plus" aria-label="Add workspace"><svg width="24" height="24" viewBox="0 0 24 24"><path d="M12 1v22M1 12h22" stroke="#fff" stroke-width="3" /></svg></button>
          <button class="addcomp"><svg width="24" height="24" viewBox="0 0 24 24"><path d="M12 1v22M1 12h22" stroke="#fff" stroke-width="3" /></svg>Add component</button>
          <i class="wdiv"></i>
          <button class="icon-btn collapse" aria-label="Collapse header"><svg width="34" height="32" viewBox="0 0 34 32" fill="none" stroke="#fff" stroke-width="3.500"><path d="M1 4h32M17 11v17M9 20l8 9 8-9" /></svg></button>
        </nav>

        <div class="panel">
          <div class="panelbar">
            <h1>Option Wizard</h1>
            <button class="icon-btn" aria-label="Add panel tab"><svg width="22" height="22" viewBox="0 0 22 22"><path d="M11 0v22M0 11h22" stroke="#fff" stroke-width="3" /></svg></button>
            <button class="icon-btn push" aria-label="Full screen"><svg width="22" height="22" viewBox="0 0 22 22"><path d="M2 8V2h6M14 2h6v6M20 14v6h-6M8 20H2v-6" fill="none" stroke="#fff" stroke-width="3.500" /></svg></button>
            <button class="icon-btn" aria-label="Close panel"><svg width="22" height="22" viewBox="0 0 22 22"><path d="M2 2l18 18M20 2L2 20" stroke="#fff" stroke-width="3" /></svg></button>
          </div>

          <div class="wizard">
            <form class="steps" @submit.prevent>
              <fieldset class="step">
                <legend>1. Choose currency</legend>
                <div class="seg">
                  <label :class="{ on: currency === 'BTC' }"><input v-model="currency" type="radio" name="currency" value="BTC"><svg class="coin" viewBox="0 0 32 32" v-html="btcIcon"></svg>BTC</label>
                  <label :class="{ on: currency === 'ETH' }"><input v-model="currency" type="radio" name="currency" value="ETH"><svg class="coin" viewBox="0 0 32 32" v-html="ethIcon"></svg>ETH</label>
                </div>
              </fieldset>
              <div class="step">
                <label for="price">2. Expected Price</label>
                <div class="field"><input id="price" v-model="expectedPrice" type="text"><span>USD</span></div>
              </div>
              <div class="step">
                <label for="expiry">3. Date of Price Expectation</label>
                <div class="field tall">
                  <select id="expiry" v-model="expiry"><option>26 December 2025</option><option>27 March 2026</option></select>
                  <svg class="caret" width="28" height="28" viewBox="0 0 28 28"><path d="M3 8l11 11L25 8" fill="none" stroke="#fff" stroke-width="4" /></svg>
                </div>
              </div>
              <div class="step">
                <label for="invest">4. Total Investment</label>
                <div class="field"><input id="invest" v-model="investment" type="text"><span>BTC</span></div>
              </div>
              <div class="step">
                <span class="steplabel">5. Calculate</span>
                <button class="primary calc" type="submit">Calculate Strategy</button>
              </div>
            </form>

            <div class="output">
              <section class="chartcol">
                <h2>Profit &amp; Loss Chart</h2>
                <div class="card">
                  <svg class="chart" viewBox="0 0 1491 804">
                    <g stroke="#38393b" stroke-width="2" stroke-dasharray="8 6">
                      <path v-for="t in xTicks" :key="t.t" :d="`M${t.x} ${plot.top}V${plot.bottom}`" />
                      <path v-for="t in yTicks" :key="t.t" :d="`M${plot.left} ${t.y}H${plot.right}`" :class="{ zero: t.t === 0 }" />
                    </g>
                    <polyline :points="curve" fill="none" stroke="#6b55f5" stroke-width="4" />
                    <path :d="`M${Math.round(px(200000))} ${plot.top}V${plot.bottom}`" stroke="#d2d2d2" stroke-width="2" />
                    <g class="tick">
                      <text v-for="t in xTicks" :key="t.t" :x="t.x" y="735" text-anchor="middle">{{ t.t }}</text>
                      <text v-for="t in yTicks" :key="t.t" x="86" :y="t.y + 8" text-anchor="end">{{ t.t }}</text>
                    </g>
                    <text class="axis" x="793" y="771" text-anchor="middle">Index Price</text>
                    <text class="axis" transform="translate(48 359) rotate(-90)" text-anchor="middle">PNL (BTC)</text>
                    <text class="marker" transform="translate(890 41) rotate(90)">Expected Price: $200,000</text>
                  </svg>
                </div>
              </section>

              <section class="strategy">
                <h2>Optimal Strategy</h2>
                <p class="leg"><span class="chip buy">Buy</span><span>12.4x BTC-26DEC25-140000-C</span><span class="chip">Long Call</span></p>
                <div class="tablebox">
                  <table>
                    <tbody>
                      <tr v-for="r in results" :key="r.label">
                        <th scope="row"><span :class="{ hint: r.hint }">{{ r.label }}</span></th>
                        <td :class="{ up: r.hint }">{{ r.value }}</td>
                      </tr>
                    </tbody>
                  </table>
                </div>
                <button class="primary">Review Order</button>
                <button class="secondary"><svg width="34" height="34" viewBox="0 0 24 24" fill="#fff"><path d="M18 16.080c-.76 0-1.440.3-1.960.77L8.910 12.700c.05-.23.09-.46.09-.7s-.04-.47-.09-.7l7.050-4.110c.54.5 1.250.81 2.040.81 1.660 0 3-1.340 3-3s-1.340-3-3-3-3 1.340-3 3c0 .24.04.47.09.7L8.040 9.810C7.500 9.310 6.790 9 6 9c-1.660 0-3 1.340-3 3s1.340 3 3 3c.79 0 1.500-.31 2.040-.81l7.120 4.160c-.05.21-.08.43-.08.65 0 1.610 1.310 2.920 2.920 2.920s2.920-1.310 2.920-2.920-1.310-2.920-2.920-2.920z" /></svg>Copy Strategy Link</button>
              </section>
            </div>
          </div>
        </div>
      </section>
    </main>

    <footer class="dock">
      <template v-for="(d, i) in dock" :key="i">
        <i v-if="d.divider" class="ddiv"></i>
        <div v-else class="dockapp" :title="d.name">
          <div v-if="d.cal" class="cal"><span>MAR</span><b>8</b></div>
          <svg v-else class="tile" viewBox="0 0 104 104" v-html="d.art"></svg>
          <span v-if="d.badge" class="badge">{{ d.badge }}</span>
          <i class="run" :class="{ open: d.open }"></i>
        </div>
      </template>
    </footer>
  </div>
</template>

<style>
body { background: #121812; }
</style>

<style scoped>
* { box-sizing: border-box; }
p, h1, h2 { margin: 0; }
a { color: inherit; text-decoration: none; }
button, input, select { font: inherit; color: inherit; border: 0; background: none; padding: 0; margin: 0; outline: 0; }
svg { flex: none; display: block; }
i, em { font-style: normal; }

.desktop {
  min-height: 100vh;
  display: flex;
  flex-direction: column;
  font-family: Inter, "Liberation Sans", sans-serif;
  background:
    radial-gradient(60px 80px at 130px 2190px, #33491f, transparent),
    radial-gradient(50px 60px at 40px 2120px, #26391f, transparent),
    linear-gradient(90deg, #17251d 0%, #1a2a20 6%, #1a2418 20%, #1f1e16 45%, #201a14 60%, #1d2318 72%, #2c2117 86%, #131512 92%, #1b1b1a 96%, #101011 100%);
}

.menubar {
  height: 74px;
  padding: 0 33px 0 39px;
  display: flex;
  justify-content: space-between;
  align-items: center;
  color: #fff;
  font-size: 25px;
  background: linear-gradient(90deg, #4b4b43, #494c43 25%, #454639 50%, #454839 75%, #3f4237);
}
.menus { display: flex; align-items: center; gap: 43px; text-shadow: 0 2px 6px rgba(0, 0, 0, .4); }
.apple { width: 28px; height: 32px; }
.menu.app { font-weight: 700; }
.tray { display: flex; align-items: center; }
.tray-icon { height: 40px; overflow: visible; }
.clock { display: flex; gap: 18px; margin-left: 32px; font-size: 26px; font-variant-numeric: tabular-nums; }

.window {
  flex: 1;
  margin-top: 2px;
  display: flex;
  flex-direction: column;
  border-radius: 20px;
  overflow: hidden;
  background: #fff;
}
.icon-btn { display: flex; align-items: center; justify-content: center; }
.push { margin-left: auto; }
.tabstrip {
  height: 80px;
  padding: 0 24px 0 42px;
  display: flex;
  align-items: center;
  background: #e4e3e8;
}
.light { width: 24px; height: 24px; border-radius: 50%; margin-right: 16px; }
.red { background: #ed6a5e; }
.amber { background: #f5bf4f; }
.green { background: #61c554; margin-right: 28px; }
.btab {
  width: 470px;
  height: 64px;
  padding: 0 22px 0 26px;
  display: flex;
  align-items: center;
  gap: 18px;
  border-radius: 18px;
  background: #fff;
  color: #3c4043;
  font-size: 24px;
}
.btab .icon-btn { margin-left: auto; }
.fav { width: 28px; height: 28px; }
.newtab { margin-left: 30px; }

.toolbar {
  height: 80px;
  padding: 0 28px;
  display: flex;
  align-items: center;
}
.navset { display: flex; gap: 28px; }
.mark { margin-left: 328px; }
.urlbar {
  width: 1596px;
  height: 64px;
  margin-left: 30px;
  padding: 0 20px 0 16px;
  display: flex;
  align-items: center;
  border-radius: 18px;
  background: #eeedf2;
}
.url { flex: 1; margin-left: 28px; font-size: 28px; color: #46474c; }
.url b { font-weight: 400; color: #17181c; }
.vbar { width: 2px; height: 32px; margin: 0 20px; background: #b4b4ba; }
.bat { margin-left: 32px; }
.exts { margin-left: auto; display: flex; gap: 28px; }

.bookmarks {
  height: 70px;
  padding: 0 30px 8px 35px;
  display: flex;
  align-items: center;
  font-size: 24px;
  color: #3c4043;
  border-bottom: 2px solid #dcdde6;
}
.bdiv { width: 3px; height: 32px; margin: 0 28px; background: #dfdfe8; border-radius: 2px; }
.bm { width: 308px; display: flex; align-items: center; gap: 12px; white-space: nowrap; }
.more { margin-left: auto; }
.all { width: auto; }

.page {
  flex: 1;
  display: flex;
  flex-direction: column;
  font-family: Roboto, "Liberation Sans", sans-serif;
  color: #fff;
  background: #141517;
}
.site { height: 104px; padding: 0 30px 0 32px; display: flex; align-items: center; font-size: 28px; }
.logo { display: flex; align-items: center; gap: 4px; font-size: 34px; font-weight: 700; width: 204px; }
.home { margin-left: 52px; }
.links { flex: 1; display: flex; align-items: center; gap: 81px; margin-left: 54px; }
.dot { width: 12px; height: 12px; border-radius: 50%; margin-left: -64px; background: #5ecdc0; }
.box {
  height: 72px;
  margin-left: 18px;
  padding: 0 16px;
  display: flex;
  align-items: center;
  border: 2px solid #28292b;
  border-radius: 16px;
  white-space: nowrap;
}
.box b { font-weight: 500; }
.coin { width: 32px; height: 32px; }
.up { color: #54b274; }
.down { color: #e5405e; }
.box .up, .box .down { font-weight: 700; }
.chev { width: 82px; justify-content: center; }
.quote { width: 570px; padding: 0 12px 0 14px; }
.quote .up { margin-left: 14px; }
.quote b + .dim { margin: 0 10px 0 auto; font-size: 26px; color: #aaabad; }
.quote svg + b { margin-left: 14px; }
.qdiv { width: 2px; height: 36px; margin: 0 22px 0 16px; background: #28292b; }
.stable { width: 184px; padding: 0 14px 0 12px; justify-content: space-between; }
.equity { width: 168px; }
.equity .coin { margin-left: auto; }
.margin { width: 366px; height: 76px; padding: 0 0 0 16px; }
.meters {
  flex: 1;
  display: grid;
  grid-template-columns: 36px 95px 1fr;
  gap: 4px 10px;
  align-items: center;
  text-align: right;
  font-size: 22px;
  line-height: 24px;
  padding-right: 16px;
}
.meter { height: 16px; border-radius: 6px; background: #222325; overflow: hidden; }
.fill { display: block; width: 1px; height: 16px; background: #d8d8d8; }
.fill.im { width: 3px; }
.pm {
  width: 114px;
  height: 76px;
  margin-right: -2px;
  display: flex;
  align-items: center;
  justify-content: center;
  gap: 8px;
  border: 2px solid #28292b;
  border-radius: 16px;
  background: #1a1b1d;
}
.pm em { color: #5ecdc0; }
.account { width: 240px; padding: 0 13px; gap: 16px; font-size: 27px; }
.actions { display: flex; gap: 44px; margin-left: 46px; }

.workspaces {
  height: 78px;
  padding: 0 32px 0 8px;
  display: flex;
  align-items: center;
  font-size: 26px;
  background: #1a1b1d;
}
.ws {
  height: 60px;
  margin: 6px 8px 0;
  padding: 0 24px 4px;
  display: flex;
  align-items: center;
  border-radius: 16px 16px 0 0;
}
.ws.on { padding-bottom: 0; border-bottom: 6px solid #5ecdc0; background: #38393b; }
.wdiv { width: 2px; height: 40px; background: #38393b; }
.plus { margin-left: 22px; }
.addcomp {
  height: 52px;
  margin: 0 17px 0 auto;
  padding: 0 16px 0 22px;
  display: flex;
  align-items: center;
  gap: 13px;
  border-radius: 8px;
  background: #38393b;
  font-weight: 500;
}
.collapse { margin-left: 33px; }

.panel { flex: 1; border: 4px solid #343537; border-width: 4px 4px 2px; border-radius: 0 0 20px 20px; }
.panelbar { height: 64px; padding: 0 17px 0 20px; display: flex; align-items: center; gap: 33px; }
.panelbar h1 { font-size: 24px; font-weight: 700; }

.wizard { max-width: 2274px; margin: 64px auto 80px; }
.steps { display: grid; grid-template-columns: repeat(5, minmax(0, 1fr)); gap: 32px; align-items: start; }
.step { border: 0; margin: 0; padding: 0; min-width: 0; }
.step > label, .step > legend, .steplabel {
  display: block;
  padding: 0;
  margin-bottom: 18px;
  font-size: 32px;
  line-height: 40px;
  font-weight: 600;
  white-space: nowrap;
}
.seg { display: flex; gap: 16px; height: 84px; padding: 8px; border-radius: 16px; background: #2d2e30; font-size: 28px; }
.seg label {
  flex: 1;
  display: flex;
  align-items: center;
  justify-content: center;
  gap: 9px;
  border-radius: 16px;
}
.seg input { position: absolute; opacity: 0; }
.seg .on { background: #f5f7f7; color: #141517; }
.field {
  position: relative;
  height: 84px;
  padding: 0 34px 0 26px;
  display: flex;
  align-items: center;
  border-radius: 16px;
  background: #2d2e30;
  font-size: 28px;
}
.field input { flex: 1; min-width: 0; }
.field span { color: #a9aaab; }
.field.tall { height: 88px; padding: 0; }
.field select { width: 100%; height: 100%; padding: 0 26px; appearance: none; }
.caret { position: absolute; right: 22px; top: 30px; pointer-events: none; }
.primary, .secondary {
  width: 100%;
  height: 88px;
  margin-top: 16px;
  display: flex;
  align-items: center;
  justify-content: center;
  gap: 20px;
  border-radius: 16px;
  background: #4aa59e;
  font-size: 29px;
  font-weight: 700;
}
.primary { text-shadow: 2px 3px 4px rgba(0, 0, 0, .35); }
.primary.calc { height: 84px; margin: 0; }
.secondary { background: #2d2e30; }

.output { display: flex; gap: 64px; margin-top: 68px; }
.chartcol { flex: 1495 1 0; min-width: 0; }
.strategy { flex: 715 1 0; min-width: 0; }
h2 { font-size: 40px; line-height: 48px; font-weight: 600; margin-bottom: 20px; }
.card, .tablebox { border: 2px solid #343537; border-radius: 32px; background: #1a1b1d; overflow: hidden; }
.chart { width: 100%; height: auto; font-family: Roboto, "Liberation Sans", sans-serif; }
.zero { stroke: #d2d2d2; }
.tick { font-size: 22px; fill: #c8c9ca; }
.axis { font-size: 24px; fill: #636466; }
.marker { font-size: 24px; fill: #d2d2d2; }

.leg { height: 42px; display: flex; align-items: center; gap: 16px; font-size: 28px; color: #a9aaab; white-space: nowrap; }
.chip { height: 42px; padding: 0 8px; display: flex; align-items: center; border-radius: 16px; background: #38393b; color: #fff; font-size: 22px; }
.buy { background: #54b274; }
.tablebox { margin-top: 26px; }
table { width: 100%; border-collapse: separate; border-spacing: 0; font-size: 28px; }
th, td { height: 107px; padding: 0 32px; border-top: 2px solid #343537; }
tr:first-child > * { border-top: 0; }
tr:last-child > * { height: 108px; }
th { text-align: left; font-weight: 400; }
td { text-align: right; font-weight: 700; }
.hint { display: inline-block; border-bottom: 2px dashed #fff; padding-bottom: 4px; margin-top: 6px; }

.dock {
  height: 158px;
  margin: 3px auto 10px;
  padding: 20px 20px 2px;
  display: flex;
  gap: 32px;
  border: 2px solid #8a9088;
  border-radius: 48px;
  background: linear-gradient(90deg, #5f6d66, #64736f 9%, #687f70 18%, #7c8464 27%, #69686a 35%, #6a6965 47%, #7b6b5a 54%, #677c68 62%, #6b7371 70%, #6c7471 76%, #67796a 84%, #998061 93%, #6f645d 100%);
}
.dockapp { position: relative; width: 104px; display: flex; flex-direction: column; align-items: center; }
.tile { width: 104px; height: 104px; overflow: visible; filter: drop-shadow(0 2px 3px rgba(0, 0, 0, .35)); }
.cal {
  width: 104px;
  height: 104px;
  border-radius: 24px;
  overflow: hidden;
  text-align: center;
  background: #f9f8f7;
  color: #222;
}
.cal span { display: block; height: 32px; font-size: 20px; line-height: 36px; font-weight: 600; color: #fff; background: #e2594f; }
.cal b { display: block; font-size: 64px; line-height: 68px; font-weight: 300; }
.run { width: 8px; height: 8px; border-radius: 50%; margin-top: 20px; }
.open { background: #0a0a0a; }
.badge {
  position: absolute;
  left: 70px;
  top: -12px;
  width: 50px;
  height: 50px;
  border-radius: 50%;
  background: #e74c3e;
  color: #fff;
  font-size: 28px;
  line-height: 50px;
  text-align: center;
}
.ddiv { width: 2px; height: 118px; margin: 0 14px; background: #3f4743; }
</style>
